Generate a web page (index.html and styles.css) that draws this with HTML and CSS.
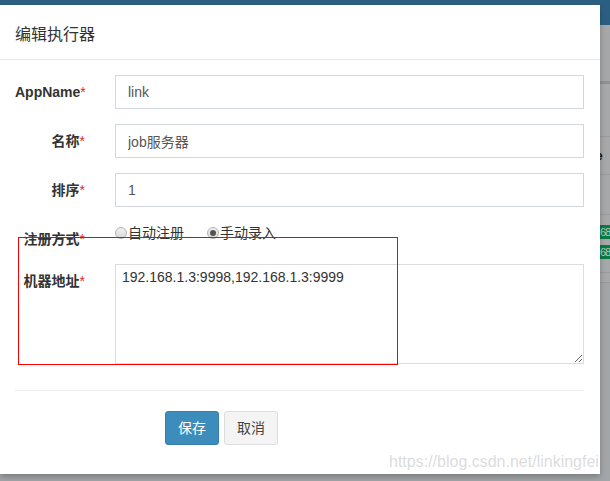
FILE: index.html
```html
<!DOCTYPE html>
<html lang="zh-CN">
<head>
<meta charset="utf-8">
<title>编辑执行器</title>
<link rel="stylesheet" href="styles.css">
</head>
<body>
<div class="page">
  <div class="topbar"></div>
  <div class="content">
    <div class="box">
      <div class="box-head"></div>
      <div class="th-row"><span class="th">AppName</span></div>
      <div class="tr"></div>
      <div class="tr tr-badges">
        <span class="badge">68</span>
        <span class="badge">68</span>
      </div>
      <div class="tr tr-thin"></div>
    </div>
  </div>
</div>

<div class="modal">
  <div class="modal-header">
    <h4 class="modal-title">编辑执行器</h4>
  </div>
  <form class="modal-body">
    <div class="form-row">
      <label class="control-label">AppName<span class="req">*</span></label>
      <input class="form-control" type="text" value="link">
    </div>
    <div class="form-row">
      <label class="control-label">名称<span class="req">*</span></label>
      <input class="form-control" type="text" value="job服务器">
    </div>
    <div class="form-row">
      <label class="control-label">排序<span class="req">*</span></label>
      <input class="form-control" type="text" value="1">
    </div>
    <div class="form-row form-row-radio">
      <label class="control-label">注册方式<span class="req">*</span></label>
      <div class="radios">
        <span class="radio-item"><span class="radio"></span>自动注册</span>
        <span class="radio-item"><span class="radio radio-checked"></span>手动录入</span>
      </div>
    </div>
    <div class="form-row">
      <label class="control-label">机器地址<span class="req">*</span></label>
      <textarea class="textarea">192.168.1.3:9998,192.168.1.3:9999</textarea>
    </div>
    <div class="divider"></div>
    <div class="actions">
      <button type="button" class="btn btn-primary">保存</button>
      <button type="button" class="btn btn-default">取消</button>
    </div>
  </form>
</div>

<div class="annotation"></div>
<div class="watermark">https://blog.csdn.net/linkingfei</div>
</body>
</html>
```
FILE: styles.css
```css
* { box-sizing: border-box; }
html, body {
  margin: 0;
  padding: 0;
}
body {
  width: 610px;
  height: 481px;
  overflow: hidden;
  position: relative;
  background: #a3a6a8;
  font-family: "Liberation Sans", "Noto Sans CJK SC", sans-serif;
  font-size: 14px;
  color: #333;
}

/* background page (dimmed) */
.page { width: 610px; }
.topbar { height: 25px; background: #2b5f82; }
.content { background: #a5a7a9; padding-top: 56px; }
.box {
  border-top: 3px solid #8f9294;
  background: #a6a8aa;
}
.box-head { height: 53px; border-bottom: 1px solid #999c9e; }
.th-row {
  height: 38px;
  border-bottom: 1px solid #999c9e;
  display: flex;
  align-items: center;
  padding-left: 542px;
}
.th { font-weight: bold; font-size: 13px; color: #111; }
.tr { height: 40px; border-bottom: 1px solid #999c9e; }
.tr-badges {
  height: 58px;
  display: flex;
  flex-direction: column;
  gap: 6px;
  padding: 10px 0 0 600px;
}
.badge {
  display: block;
  height: 14px;
  line-height: 14px;
  width: 10px;
  background: #0b7a45;
  color: #b7c9bd;
  font-size: 11px;
  padding-left: 0;
  letter-spacing: -1px;
  white-space: nowrap;
}
.tr-thin { height: 10px; }

/* modal */
.modal {
  position: absolute;
  left: 0;
  top: 5px;
  width: 600px;
  height: 469px;
  background: #fff;
  box-shadow: 0 3px 6px rgba(0, 0, 0, 0.25);
}
.modal-header {
  height: 55px;
  padding: 0 15px;
  border-bottom: 1px solid #e8e8e8;
  display: flex;
  align-items: center;
}
.modal-title {
  margin: 0;
  font-size: 16px;
  font-weight: normal;
  color: #333;
  padding-top: 1px;
}
.modal-body {
  margin: 0;
  padding: 15px 16px 0 15px;
}
.form-row {
  display: flex;
  align-items: flex-start;
  margin-bottom: 15px;
}
.control-label {
  width: 70px;
  flex: none;
  margin-right: 30px;
  text-align: right;
  font-weight: bold;
  line-height: 20px;
  padding-top: 7px;
  color: #333;
  white-space: nowrap;
}
.req { color: #e0262f; font-weight: normal; }
.form-control {
  flex: 1;
  height: 34px;
  border: 1px solid #d2d6de;
  border-radius: 0;
  padding: 6px 12px;
  font-family: inherit;
  font-size: 14px;
  color: #555;
  outline: none;
  background: #fff;
}
.form-row-radio { height: 27px; margin-bottom: 15px; }
.radios {
  display: flex;
  line-height: 20px;
  padding-top: 1px;
}
.radio-item {
  display: flex;
  align-items: center;
  margin-right: 23px;
  color: #333;
}
.radio {
  width: 12px;
  height: 12px;
  border-radius: 50%;
  border: 1px solid #b4b4b4;
  background: linear-gradient(#f2f2f2, #d8d8d8);
  margin-right: 1px;
  margin-top: -1px;
  position: relative;
}
.radio-checked::after {
  content: "";
  position: absolute;
  left: 2px;
  top: 2px;
  width: 6px;
  height: 6px;
  border-radius: 50%;
  background: #555;
}
.textarea {
  flex: 1;
  height: 100px;
  border: 1px solid #dcdcdc;
  padding: 2px 6px;
  font-family: inherit;
  font-size: 14px;
  line-height: 20px;
  color: #333;
  outline: none;
  resize: both;
  margin: 0;
}
.divider {
  height: 1px;
  background: #eeeeee;
  margin-top: 26px;
}
.actions {
  padding: 20px 0 0 150px;
  display: flex;
  gap: 5px;
}
.btn {
  height: 34px;
  padding: 6px 12px;
  font-family: inherit;
  font-size: 14px;
  line-height: 20px;
  border-radius: 3px;
  border: 1px solid transparent;
  cursor: pointer;
}
.btn-primary {
  background: #3c8dbc;
  border-color: #367fa9;
  color: #fff;
}
.btn-default {
  background: #f4f4f4;
  border-color: #dddddd;
  color: #444;
}

/* annotation overlay */
.annotation {
  position: absolute;
  left: 18px;
  top: 237px;
  width: 380px;
  height: 128px;
  border: 1px solid #f00;
  pointer-events: none;
}
.watermark {
  position: absolute;
  left: 389px;
  top: 453px;
  font-size: 16px;
  color: rgba(190, 190, 190, 0.55);
  white-space: nowrap;
  font-family: "Liberation Sans", sans-serif;
}
```
